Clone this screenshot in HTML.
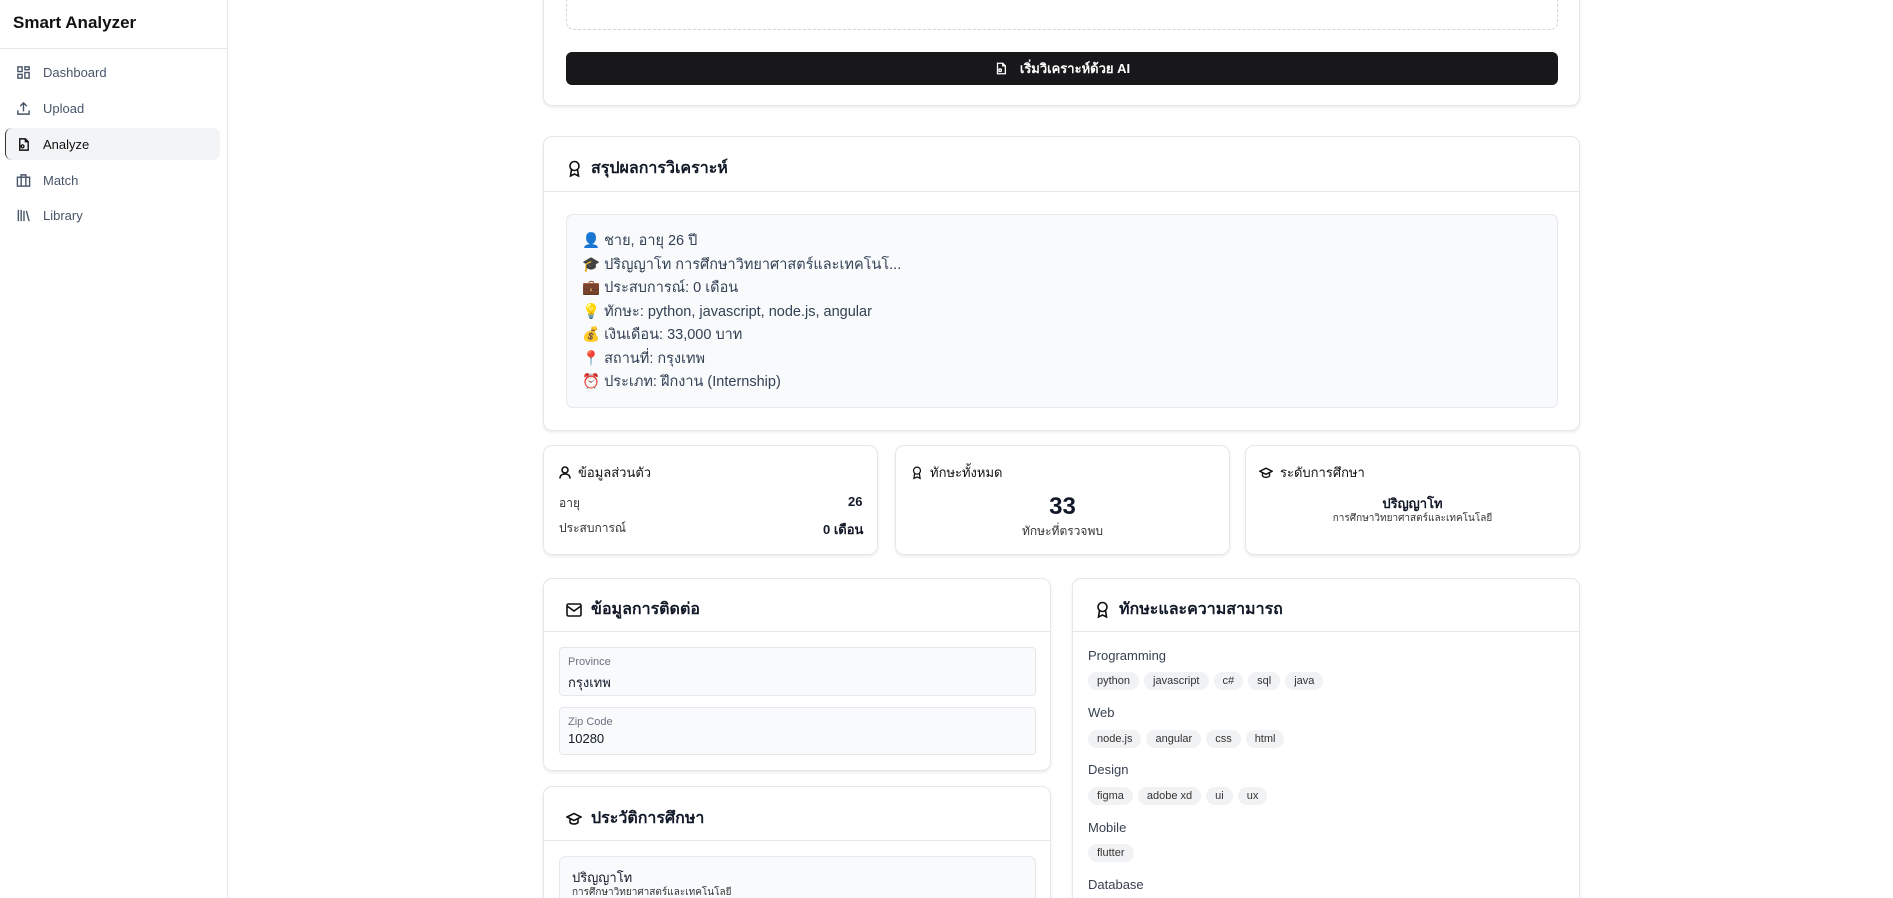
<!DOCTYPE html>
<html style="width:1893px;height:898px;overflow:hidden"><head><meta charset="utf-8"><style>
*{box-sizing:border-box;margin:0;padding:0}
body{width:1893px;height:898px;overflow:hidden;background:#fff;font-family:"Liberation Sans","Noto Sans CJK SC",sans-serif;color:#111827;position:relative}
.abs{position:absolute}
.side{left:0;top:0;width:228px;height:898px;border-right:1px solid #e5e7eb;background:#fff}
.brand{left:13px;top:13px;font-size:17px;font-weight:bold;color:#111}
.sdiv{left:0;top:48px;width:227px;height:1px;background:#e5e7eb}
.nav{left:16px;font-size:13px;color:#475569;display:flex;align-items:center;gap:12px;height:20px}
.nav svg{width:15px;height:15px;stroke:#475569;fill:none;stroke-width:1.5}
.active{left:5px;top:128px;width:215px;height:32px;background:#f3f4f6;border-radius:7px;border-left:1.5px solid #333}
.card{background:#fff;border:1px solid #e5e7eb;border-radius:9px;box-shadow:0 1.5px 3px rgba(0,0,0,.08)}
.hdr{font-size:16px;font-weight:bold;display:flex;align-items:center;gap:9px}
.hdr svg,.sh svg{fill:none;stroke:#111;stroke-width:1.6}
.line{height:1px;background:#e5e7eb}
.inner{background:#f8fafc;border:1px solid #e5e7eb;border-radius:7px}
.sum div{font-size:14.5px;color:#334155;height:23.5px;line-height:23.5px}
.sh{font-size:13px;display:flex;align-items:center;gap:7px;color:#111}
.tag{display:inline-block;background:#f1f2f4;border-radius:9px;font-size:11px;padding:0 9px;height:18px;line-height:18px;margin-right:5px;color:#333}
.cat{font-size:13px;color:#374151}
</style></head><body>
<div class="abs side"></div>
<div class="abs brand">Smart Analyzer</div>
<div class="abs sdiv"></div>
<div class="abs active"></div>
<div class="abs nav" style="top:62px"><svg viewBox="0 0 16 16"><rect x="2" y="2" width="4.5" height="5"/><rect x="9.5" y="2" width="4.5" height="3"/><rect x="2" y="10" width="4.5" height="4"/><rect x="9.5" y="8" width="4.5" height="6"/></svg>Dashboard</div>
<div class="abs nav" style="top:98px"><svg viewBox="0 0 16 16"><path d="M2 10v4h12v-4M8 11V2M4.5 5.5 8 2l3.5 3.5"/></svg>Upload</div>
<div class="abs nav" style="top:134px;color:#111"><svg viewBox="0 0 16 16" style="stroke:#111"><path d="M4 2h6l3 3v9H4zM10 2v3h3"/><circle cx="7" cy="10" r="1.5"/></svg>Analyze</div>
<div class="abs nav" style="top:170px"><svg viewBox="0 0 16 16"><rect x="1.5" y="4.5" width="13" height="9.5"/><path d="M5.5 4.5V2h5v2.5M5.5 4.5V14M10.5 4.5V14"/></svg>Match</div>
<div class="abs nav" style="top:205px"><svg viewBox="0 0 16 16"><path d="M2.5 2v12M5.5 2v12M8.5 3v11M11 3l3 11"/></svg>Library</div>

<div class="abs card" style="left:543px;top:-20px;width:1037px;height:126px"></div>
<div class="abs" style="left:566px;top:-10px;width:992px;height:40px;border:1px dashed #d1d5db;border-radius:8px"></div>
<div class="abs" style="left:566px;top:52px;width:992px;height:33px;background:#18181b;border-radius:6px;color:#fff;font-size:13px;font-weight:bold;display:flex;align-items:center;justify-content:center;gap:12px"><svg width="14" height="15" viewBox="0 0 16 16" fill="none" stroke="#fff" stroke-width="1.5"><path d="M4 2h6l3 3v9H4zM10 2v3h3"/><circle cx="7" cy="10" r="1.5"/></svg>เริ่มวิเคราะห์ด้วย AI</div>

<div class="abs card" style="left:543px;top:136px;width:1037px;height:295px"></div>
<div class="abs hdr" style="left:567px;top:156px"><svg width="15" height="18" viewBox="0 0 15 18"><circle cx="7.5" cy="6" r="4.5"/><path d="M4.5 9.5 3.5 16l4-2 4 2-1-6.5"/></svg>สรุปผลการวิเคราะห์</div>
<div class="abs line" style="left:544px;top:191px;width:1035px"></div>
<div class="abs inner sum" style="left:566px;top:214px;width:992px;height:194px;padding:15px 0 0 15px">
<div>👤 ชาย, อายุ 26 ปี</div>
<div>🎓 ปริญญาโท การศึกษาวิทยาศาสตร์และเทคโนโ...</div>
<div>💼 ประสบการณ์: 0 เดือน</div>
<div>💡 ทักษะ: python, javascript, node.js, angular</div>
<div>💰 เงินเดือน: 33,000 บาท</div>
<div>📍 สถานที่: กรุงเทพ</div>
<div>⏰ ประเภท: ฝึกงาน (Internship)</div>
</div>

<div class="abs card" style="left:543px;top:445px;width:335px;height:110px"></div>
<div class="abs sh" style="left:559px;top:462px"><svg width="12" height="13" viewBox="0 0 12 13"><circle cx="6" cy="4" r="3"/><path d="M1 12.5c0-3 2-4.5 5-4.5s5 1.5 5 4.5"/></svg>ข้อมูลส่วนตัว</div>
<div class="abs" style="left:559px;top:494px;font-size:12px;color:#333">อายุ</div>
<div class="abs" style="left:848px;top:494px;font-size:13px;font-weight:bold">26</div>
<div class="abs" style="left:559px;top:519px;font-size:12px;color:#333">ประสบการณ์</div>
<div class="abs" style="left:823px;top:519px;font-size:13px;font-weight:bold">0 เดือน</div>

<div class="abs card" style="left:895px;top:445px;width:335px;height:110px"></div>
<div class="abs sh" style="left:911px;top:462px"><svg width="12" height="14" viewBox="0 0 15 18"><circle cx="7.5" cy="6" r="4.5"/><path d="M4.5 9.5 3.5 16l4-2 4 2-1-6.5"/></svg>ทักษะทั้งหมด</div>
<div class="abs" style="left:895px;top:493px;width:335px;text-align:center;font-size:24px;font-weight:bold">33</div>
<div class="abs" style="left:895px;top:522px;width:335px;text-align:center;font-size:12px;color:#333">ทักษะที่ตรวจพบ</div>

<div class="abs card" style="left:1245px;top:445px;width:335px;height:110px"></div>
<div class="abs sh" style="left:1259px;top:462px"><svg width="14" height="12" viewBox="0 0 16 13"><path d="M1 4.5 8 1l7 3.5L8 8zM4 6v4c2 2 6 2 8 0V6"/></svg>ระดับการศึกษา</div>
<div class="abs" style="left:1245px;top:493px;width:335px;text-align:center;font-size:13px;font-weight:bold">ปริญญาโท</div>
<div class="abs" style="left:1245px;top:511px;width:335px;text-align:center;font-size:10px;color:#333">การศึกษาวิทยาศาสตร์และเทคโนโลยี</div>

<div class="abs card" style="left:543px;top:578px;width:508px;height:193px"></div>
<div class="abs hdr" style="left:566px;top:597px"><svg width="16" height="14" viewBox="0 0 16 14"><rect x="1" y="1" width="14" height="12" rx="1.5"/><path d="M1 3l7 5 7-5"/></svg>ข้อมูลการติดต่อ</div>
<div class="abs line" style="left:544px;top:631px;width:506px"></div>
<div class="abs inner" style="left:559px;top:647px;width:477px;height:49px;border-radius:4px"><div style="position:absolute;left:8px;top:8px;font-size:11px;color:#6b7280">Province</div><div style="position:absolute;left:8px;top:24px;font-size:13px">กรุงเทพ</div></div>
<div class="abs inner" style="left:559px;top:707px;width:477px;height:48px;border-radius:4px"><div style="position:absolute;left:8px;top:8px;font-size:11px;color:#6b7280">Zip Code</div><div style="position:absolute;left:8px;top:23px;font-size:13px">10280</div></div>

<div class="abs card" style="left:543px;top:786px;width:508px;height:160px"></div>
<div class="abs hdr" style="left:566px;top:806px"><svg width="16" height="14" viewBox="0 0 16 13"><path d="M1 4.5 8 1l7 3.5L8 8zM4 6v4c2 2 6 2 8 0V6"/></svg>ประวัติการศึกษา</div>
<div class="abs line" style="left:544px;top:840px;width:506px"></div>
<div class="abs inner" style="left:559px;top:856px;width:477px;height:70px"><div style="position:absolute;left:12px;top:10px;font-size:13px">ปริญญาโท</div><div style="position:absolute;left:12px;top:28px;font-size:10px;color:#333">การศึกษาวิทยาศาสตร์และเทคโนโลยี</div></div>

<div class="abs card" style="left:1072px;top:578px;width:508px;height:400px"></div>
<div class="abs hdr" style="left:1095px;top:597px"><svg width="15" height="18" viewBox="0 0 15 18"><circle cx="7.5" cy="6" r="4.5"/><path d="M4.5 9.5 3.5 16l4-2 4 2-1-6.5"/></svg>ทักษะและความสามารถ</div>
<div class="abs line" style="left:1073px;top:631px;width:506px"></div>
<div class="abs cat" style="left:1088px;top:648px">Programming</div>
<div class="abs" style="left:1088px;top:671px"><span class="tag">python</span><span class="tag">javascript</span><span class="tag">c#</span><span class="tag">sql</span><span class="tag">java</span></div>
<div class="abs cat" style="left:1088px;top:705px">Web</div>
<div class="abs" style="left:1088px;top:729px"><span class="tag">node.js</span><span class="tag">angular</span><span class="tag">css</span><span class="tag">html</span></div>
<div class="abs cat" style="left:1088px;top:762px">Design</div>
<div class="abs" style="left:1088px;top:786px"><span class="tag">figma</span><span class="tag">adobe xd</span><span class="tag">ui</span><span class="tag">ux</span></div>
<div class="abs cat" style="left:1088px;top:820px">Mobile</div>
<div class="abs" style="left:1088px;top:843px"><span class="tag">flutter</span></div>
<div class="abs cat" style="left:1088px;top:877px">Database</div>
</body></html>
